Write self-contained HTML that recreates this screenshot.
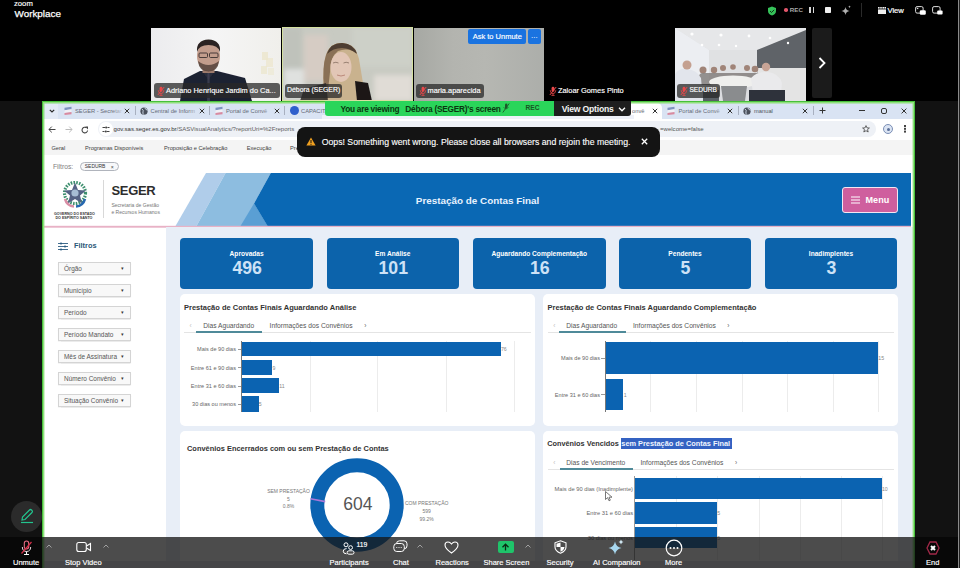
<!DOCTYPE html>
<html><head><meta charset="utf-8">
<style>
*{margin:0;padding:0;box-sizing:border-box}
html,body{width:960px;height:568px;overflow:hidden;background:#000;font-family:"Liberation Sans",sans-serif}
.a{position:absolute}
.t{position:absolute;white-space:nowrap;line-height:1}
#top{left:0;top:0;width:960px;height:101px;background:#000}
#share{left:0;top:101px;width:960px;height:467px;background:#121212}
#win{left:42px;top:101px;width:873px;height:467px;background:#fff;overflow:hidden}
#gb{left:42px;top:101px;width:873px;height:467px;border:1.3px solid #47c03b;border-bottom:none;box-shadow:inset 1.4px 1.4px 0 #8fe07c,inset -1.4px 0 0 #8fe07c;pointer-events:none}
</style></head><body>
<div class="a" id="top">
  <div class="t" style="left:14px;top:0px;font-size:7.7px;color:#fff;-webkit-text-stroke:0.15px #fff">zoom</div>
  <div class="t" style="left:14.5px;top:8.8px;font-size:9.9px;color:#fff;-webkit-text-stroke:0.25px #fff">Workplace</div>
</div>
<div class="a" id="share"></div>
<!-- gallery tiles -->
<svg class="a" style="left:151px;top:28px" width="130" height="73" viewBox="0 0 130 73">
 <defs><filter id="b1" x="-10%" y="-10%" width="120%" height="120%"><feGaussianBlur stdDeviation="0.55"/></filter>
 <linearGradient id="g1" x1="0" x2="1"><stop offset="0" stop-color="#ececee"/><stop offset="0.5" stop-color="#f5f5f5"/><stop offset="1" stop-color="#f0efeb"/></linearGradient></defs>
 <rect width="130" height="73" fill="url(#g1)"/>
 <g filter="url(#b1)">
 <rect x="111" y="24" width="6" height="8" fill="#ebe4c8" opacity="0.7"/><rect x="115" y="30" width="7" height="9" fill="#ece6cc" opacity="0.7"/><rect x="110" y="38" width="6" height="8" fill="#ebe5ca" opacity="0.7"/><rect x="117" y="40" width="6" height="7" fill="#ede7cf" opacity="0.6"/>
 <path d="M49 43 L66 43 L94 50 L101 73 L29 73 L33 51Z" fill="#1c2030"/>
 <path d="M51 43 L57.5 52 L64 43Z" fill="#2a2e3c"/>
 <rect x="51.5" y="37" width="12" height="8" fill="#9c7a6c"/>
 <ellipse cx="57.5" cy="28" rx="11.5" ry="15" fill="#c29c8c"/>
 <path d="M46 24 Q45 12 57.5 11.5 Q70 12 69 24 Q67 17 57.5 17 Q48 17 46 24Z" fill="#2b2321"/>
 <rect x="48" y="25" width="8.5" height="4.5" rx="1" fill="none" stroke="#3a3030" stroke-width="0.9"/>
 <rect x="58.5" y="25" width="8.5" height="4.5" rx="1" fill="none" stroke="#3a3030" stroke-width="0.9"/>
 <path d="M47 33 Q48 43.5 57.5 43.5 Q67 43.5 68 33 Q63 37 57.5 37 Q52 37 47 33Z" fill="#4e3c34" opacity="0.8"/>
 <path d="M56.5 45 L58.5 45 L59 73 L56 73Z" fill="#44465a" opacity="0.7"/>
 </g>
</svg>
<svg class="a" style="left:282px;top:27px" width="131" height="74" viewBox="0 0 131 74">
 <defs><filter id="b2" x="-20%" y="-20%" width="140%" height="140%"><feGaussianBlur stdDeviation="2.5"/></filter><filter id="b3" x="-20%" y="-20%" width="140%" height="140%"><feGaussianBlur stdDeviation="0.6"/></filter></defs>
 <rect width="131" height="74" fill="#c8cac2"/>
 <g filter="url(#b2)">
  <rect x="0" y="0" width="20" height="74" fill="#bfc2bb"/>
  <rect x="22" y="8" width="24" height="46" fill="#d6ccc4"/>
  <rect x="2" y="42" width="20" height="30" fill="#dfe1df"/>
  <rect x="92" y="48" width="39" height="26" fill="#e0dcd6"/>
  <rect x="70" y="0" width="61" height="40" fill="#cdd0c8"/>
 </g>
 <g filter="url(#b3)">
  <path d="M42 74 Q40 50 43 32 Q46 16 59 16 Q73 16 77 32 Q80 50 84 74Z" fill="#c9b28e"/>
  <path d="M42 60 Q40 40 44 28 Q48 16 60 16 Q72 17 75 26 Q66 20 56 24 Q48 30 48 45 Q47 55 46 62Z" fill="#8a7056"/>
  <path d="M45 27 Q48 16 60 16 Q72 17 75 27 Q68 21 60 21 Q51 21 45 27Z" fill="#4e3e30"/>
  <ellipse cx="59" cy="40" rx="10.5" ry="15" fill="#e2c6b6"/><path d="M51 36 Q54 34.5 56.5 36 M61.5 36 Q64 34.5 67 36" stroke="#6a5448" stroke-width="0.9" fill="none" opacity="0.7"/><path d="M55 48 Q59 50 63 48" stroke="#b0786a" stroke-width="1" fill="none" opacity="0.8"/>
  <path d="M73 54 L86 56 L90 74 L75 74Z" fill="#1a1818"/>
  <path d="M22 62 L44 56 L46 74 L18 74Z" fill="#34302c" opacity="0.9"/>
 </g>
</svg>
<div class="a" style="left:282px;top:27px;width:131px;height:74px;border:1.5px solid #d4e0a0"></div>
<div class="a" style="left:413.5px;top:28px;width:130px;height:73px;background:linear-gradient(90deg,#a6a8a3 0%,#b3b4af 30%,#b6b7b2 55%,#acaeaa 100%)"></div>
<div class="a" style="left:545px;top:28px;width:129px;height:73px;background:#000"></div>
<svg class="a" style="left:675px;top:28px" width="131" height="73" viewBox="0 0 131 73">
 <defs><filter id="b5" x="-10%" y="-10%" width="120%" height="120%"><feGaussianBlur stdDeviation="0.7"/></filter></defs>
 <rect width="131" height="73" fill="#dcdde0"/>
 <g filter="url(#b5)">
 <polygon points="0,0 131,0 131,3 82,22 34,22 0,0" fill="#e6e7e9"/>
 <polygon points="0,0 34,22 34,56 0,73" fill="#eceef2"/>
 <rect x="34" y="22" width="48" height="30" fill="#e0e1e3"/>
 <polygon points="82,22 131,2 131,45 82,45" fill="#5f6367"/>
 <polygon points="82,40 131,40 131,73 84,73" fill="#e4e4e4"/>
 <g fill="#fff"><circle cx="17" cy="6" r="1.6"/><circle cx="46" cy="7" r="1.6"/><circle cx="74" cy="8" r="1.4"/><circle cx="27" cy="17" r="1.3"/><circle cx="44" cy="17" r="1.3"/><circle cx="61" cy="18" r="1.2"/><circle cx="95" cy="10" r="1.3"/><circle cx="113" cy="15" r="1.2"/></g>
 <g fill="#a08478"><circle cx="28" cy="42" r="3.5"/><circle cx="39" cy="42" r="3.2"/><circle cx="48" cy="40" r="3"/><circle cx="58" cy="39" r="2.8"/><circle cx="72" cy="40" r="3"/><circle cx="80" cy="41" r="3.3"/></g>
 <rect x="24" y="45" width="64" height="12" rx="4" fill="#7d7876" opacity="0.8"/>
 <ellipse cx="58" cy="54" rx="24" ry="6.5" fill="#efefed"/>
 <polygon points="46,58 72,58 70,73 48,73" fill="#8a8c8e"/>
 <path d="M0 46 Q4 40 12 41 Q22 42 26 50 L28 73 L0 73Z" fill="#e2e5ec"/>
 <circle cx="12" cy="37" r="4.5" fill="#c4a090"/>
 <path d="M76 50 Q82 43 92 44 Q104 45 107 55 L106 66 L78 66Z" fill="#eaeaec"/>
 <circle cx="91" cy="39" r="4.2" fill="#c8a496"/>
 <rect x="74" y="62" width="36" height="11" fill="#2d313a"/>
 <rect x="28" y="62" width="16" height="11" fill="#3a3e44" opacity="0.8"/>
 </g>
</svg>
<div class="a" style="left:812px;top:28px;width:20px;height:70px;background:#1b1b1b;border-radius:2px"></div>
<svg class="a" style="left:818px;top:57px" width="8" height="12" viewBox="0 0 8 12"><path d="M1.5 1 L6.5 6 L1.5 11" stroke="#fff" stroke-width="1.8" fill="none"/></svg>
<!-- name labels -->
<div class="a" style="left:154px;top:83px;width:126px;height:15px;border-radius:3px;background:rgba(40,40,40,0.75)"></div>
<svg class="a" style="left:157px;top:85.5px" width="8" height="10" viewBox="0 0 8 10"><rect x="2.6" y="0.8" width="2.8" height="5" rx="1.4" fill="#e8484a"/><path d="M1.2 4.2 Q1.4 7.6 4 7.6 Q6.6 7.6 6.8 4.2 M4 7.6V9.4 M2.4 9.4H5.6" stroke="#e8484a" stroke-width="0.8" fill="none"/><path d="M0.8 9 L7.2 1" stroke="#e8484a" stroke-width="1"/></svg>
<div class="t" style="left:166px;top:87px;font-size:7.4px;color:#fff;-webkit-text-stroke:0.15px #fff">Adriano Henrique Jardim do Ca...</div>
<div class="a" style="left:285px;top:84px;width:57px;height:14px;border-radius:3px;background:rgba(40,40,40,0.75)"></div>
<div class="t" style="left:287px;top:87px;font-size:6.9px;color:#fff;-webkit-text-stroke:0.15px #fff">Débora (SEGER)</div>
<div class="a" style="left:416px;top:84px;width:68px;height:14px;border-radius:3px;background:rgba(40,40,40,0.75)"></div>
<svg class="a" style="left:419px;top:85.5px" width="8" height="10" viewBox="0 0 8 10"><rect x="2.6" y="0.8" width="2.8" height="5" rx="1.4" fill="#e8484a"/><path d="M1.2 4.2 Q1.4 7.6 4 7.6 Q6.6 7.6 6.8 4.2 M4 7.6V9.4 M2.4 9.4H5.6" stroke="#e8484a" stroke-width="0.8" fill="none"/><path d="M0.8 9 L7.2 1" stroke="#e8484a" stroke-width="1"/></svg>
<div class="t" style="left:427.5px;top:87px;font-size:7.4px;color:#fff;-webkit-text-stroke:0.15px #fff">maria.aparecida</div>
<div class="a" style="left:468px;top:29px;width:58px;height:15px;border-radius:2px;background:#1a73e0"></div>
<div class="t" style="left:472.7px;top:33px;font-size:7.5px;color:#fff;-webkit-text-stroke:0.15px #fff">Ask to Unmute</div>
<div class="a" style="left:528px;top:29px;width:13px;height:15px;border-radius:2px;background:#1a73e0"></div>
<div class="t" style="left:531px;top:32px;font-size:8px;color:#fff">...</div>
<svg class="a" style="left:549px;top:85.5px" width="8" height="10" viewBox="0 0 8 10"><rect x="2.6" y="0.8" width="2.8" height="5" rx="1.4" fill="#e8484a"/><path d="M1.2 4.2 Q1.4 7.6 4 7.6 Q6.6 7.6 6.8 4.2 M4 7.6V9.4 M2.4 9.4H5.6" stroke="#e8484a" stroke-width="0.8" fill="none"/><path d="M0.8 9 L7.2 1" stroke="#e8484a" stroke-width="1"/></svg>
<div class="t" style="left:558px;top:87px;font-size:7.4px;color:#fff;-webkit-text-stroke:0.15px #fff">Zaloar Gomes Pinto</div>
<div class="a" style="left:677px;top:84px;width:43px;height:14px;border-radius:3px;background:rgba(40,40,40,0.75)"></div>
<svg class="a" style="left:680px;top:85.5px" width="8" height="10" viewBox="0 0 8 10"><rect x="2.6" y="0.8" width="2.8" height="5" rx="1.4" fill="#e8484a"/><path d="M1.2 4.2 Q1.4 7.6 4 7.6 Q6.6 7.6 6.8 4.2 M4 7.6V9.4 M2.4 9.4H5.6" stroke="#e8484a" stroke-width="0.8" fill="none"/><path d="M0.8 9 L7.2 1" stroke="#e8484a" stroke-width="1"/></svg>
<div class="t" style="left:689.4px;top:87.3px;font-size:6.6px;color:#fff;-webkit-text-stroke:0.15px #fff">SEDURB</div>
<!-- top right icons -->
<svg class="a" style="left:766.5px;top:5.5px" width="10" height="10" viewBox="0 0 10 10"><path d="M5 0.5 L9 2 V5 Q9 8.3 5 9.6 Q1 8.3 1 5 V2Z" fill="#36c25a"/><path d="M3 5 L4.5 6.5 L7.2 3.8" stroke="#0a2a12" stroke-width="0.9" fill="none"/></svg>
<div class="a" style="left:784.3px;top:8.3px;width:3.6px;height:3.6px;border-radius:50%;background:#e2566a"></div>
<div class="t" style="left:789.8px;top:7.2px;font-size:6.2px;font-weight:bold;color:#a8a8a8">REC</div>
<div class="a" style="left:809.2px;top:7.2px;width:1.5px;height:6px;background:#d8d8d8"></div>
<div class="a" style="left:812.8px;top:7.2px;width:1.5px;height:6px;background:#d8d8d8"></div>
<div class="a" style="left:825.3px;top:7.3px;width:6px;height:6px;background:#f0f0f0;border-radius:0.8px"></div>
<svg class="a" style="left:841px;top:5px" width="11" height="11" viewBox="0 0 11 11"><path d="M4.5 2 Q5 5.5 8.5 6 Q5 6.5 4.5 10 Q4 6.5 0.5 6 Q4 5.5 4.5 2Z" fill="#b0b0b0"/><path d="M8.5 0.6 Q8.7 1.6 9.7 1.8 Q8.7 2 8.5 3 Q8.3 2 7.3 1.8 Q8.3 1.6 8.5 0.6Z" fill="#b0b0b0"/></svg>
<div class="a" style="left:861px;top:3px;width:0.8px;height:14px;background:#2a2a2a"></div>
<svg class="a" style="left:878px;top:6.5px" width="8" height="7" viewBox="0 0 8 7"><rect x="0" y="0" width="1.6" height="1.6" fill="#eee"/><rect x="2.2" y="0" width="1.6" height="1.6" fill="#eee"/><rect x="4.4" y="0" width="1.6" height="1.6" fill="#eee"/><rect x="6.4" y="0" width="1.6" height="1.6" fill="#eee"/><rect x="0" y="2.4" width="8" height="4.6" fill="#eee"/></svg>
<div class="t" style="left:887.5px;top:6.8px;font-size:7.6px;color:#fff;-webkit-text-stroke:0.2px #fff">View</div>
<svg class="a" style="left:914.5px;top:5.5px" width="11" height="9" viewBox="0 0 11 9"><rect x="0.6" y="0.6" width="7.5" height="6.5" rx="1.5" stroke="#ddd" stroke-width="1" fill="none"/><rect x="1.8" y="1.8" width="1.5" height="1.3" fill="#ddd"/><rect x="4.8" y="4.2" width="6" height="4.6" rx="1.2" fill="#fff"/></svg>
<svg class="a" style="left:932px;top:5.5px" width="11" height="9" viewBox="0 0 11 9"><rect x="0.6" y="0.6" width="7.5" height="6.5" rx="1.5" stroke="#ddd" stroke-width="1" fill="none"/><rect x="5.2" y="4.6" width="5.4" height="4" rx="1" fill="#fff"/></svg>

<div class="a" id="win">
<!-- browser chrome: coords relative to win (42,101) -->
<div class="a" style="left:0;top:0;width:873px;height:18px;background:#d9e3f3"></div>
<div class="a" style="left:3px;top:3px;width:13px;height:15px;background:#e3eaf6"></div>
<svg class="a" style="left:6.5px;top:7.5px" width="6" height="4" viewBox="0 0 6 4"><path d="M0.8 0.8 L3 3 L5.2 0.8" stroke="#2a2a2a" stroke-width="1.2" fill="none"/></svg>
<!-- tab 1 -->
<svg class="a" style="left:21px;top:4.5px" width="10" height="10" viewBox="0 0 10 10"><path d="M1.5 1.8 L8.5 0.8 V3.3 L1.5 4.3Z" fill="#7f93bf"/><path d="M1.5 4.3 L8.5 3.3 V6 L1.5 7Z" fill="#f0f0f6"/><path d="M1.5 7 L8.5 6 V8.3 L1.5 9Z" fill="#d98aa0"/></svg>
<div class="t" style="left:33px;top:7.5px;font-size:5.75px;color:#646a76">SEGER - Secretar</div>
<div class="a" style="left:70px;top:4px;width:12px;height:10px;background:linear-gradient(90deg,rgba(217,227,243,0),#d9e3f3)"></div>
<svg class="a" style="left:81.5px;top:6.5px" width="6" height="6" viewBox="0 0 6 6"><path d="M0.8 0.8 L5.2 5.2 M5.2 0.8 L0.8 5.2" stroke="#333" stroke-width="1"/></svg>
<div class="a" style="left:93px;top:5px;width:1px;height:9px;background:#a8b0c0"></div>
<!-- tab 2 -->
<svg class="a" style="left:97px;top:4.5px" width="10" height="10" viewBox="0 0 10 10"><circle cx="5" cy="5.2" r="3.6" fill="#4a505c"/><path d="M3 3 Q4.8 4.2 4 5.8 Q3.4 7.2 4.6 8.4 M5.8 1.8 Q6.4 3.6 8.4 4.2" stroke="#d9e3f3" stroke-width="0.9" fill="none"/></svg>
<div class="t" style="left:108.5px;top:7.5px;font-size:5.75px;color:#646a76">Central de Inform</div>
<div class="a" style="left:146px;top:4px;width:12px;height:10px;background:linear-gradient(90deg,rgba(217,227,243,0),#d9e3f3)"></div>
<svg class="a" style="left:156.5px;top:6.5px" width="6" height="6" viewBox="0 0 6 6"><path d="M0.8 0.8 L5.2 5.2 M5.2 0.8 L0.8 5.2" stroke="#333" stroke-width="1"/></svg>
<div class="a" style="left:167px;top:5px;width:1px;height:9px;background:#a8b0c0"></div>
<!-- tab 3 -->
<svg class="a" style="left:172px;top:4.5px" width="10" height="10" viewBox="0 0 10 10"><path d="M1.5 1.8 L8.5 0.8 V3.3 L1.5 4.3Z" fill="#7f93bf"/><path d="M1.5 4.3 L8.5 3.3 V6 L1.5 7Z" fill="#f0f0f6"/><path d="M1.5 7 L8.5 6 V8.3 L1.5 9Z" fill="#d98aa0"/></svg>
<div class="t" style="left:184px;top:7.5px;font-size:5.75px;color:#646a76">Portal de Convê</div>
<div class="a" style="left:220px;top:4px;width:12px;height:10px;background:linear-gradient(90deg,rgba(217,227,243,0),#d9e3f3)"></div>
<svg class="a" style="left:232px;top:6.5px" width="6" height="6" viewBox="0 0 6 6"><path d="M0.8 0.8 L5.2 5.2 M5.2 0.8 L0.8 5.2" stroke="#333" stroke-width="1"/></svg>
<div class="a" style="left:242px;top:5px;width:1px;height:9px;background:#a8b0c0"></div>
<!-- tab 4 -->
<div class="a" style="left:248px;top:5px;width:9px;height:9px;border-radius:50%;background:#2f5fcc"></div>
<div class="t" style="left:259px;top:7.5px;font-size:5.75px;color:#646a76">CAPACITA</div>
<!-- active tab (mostly hidden) -->
<div class="a" style="left:520px;top:2px;width:100px;height:17px;background:#fff;border-radius:5px 5px 0 0"></div>
<div class="t" style="left:590px;top:7.5px;font-size:5.75px;color:#646a76">onvê</div>
<svg class="a" style="left:609.5px;top:6.5px" width="6" height="6" viewBox="0 0 6 6"><path d="M0.8 0.8 L5.2 5.2 M5.2 0.8 L0.8 5.2" stroke="#333" stroke-width="1"/></svg>
<!-- tab portal -->
<svg class="a" style="left:624px;top:4.5px" width="10" height="10" viewBox="0 0 10 10"><path d="M1.5 1.8 L8.5 0.8 V3.3 L1.5 4.3Z" fill="#7f93bf"/><path d="M1.5 4.3 L8.5 3.3 V6 L1.5 7Z" fill="#f0f0f6"/><path d="M1.5 7 L8.5 6 V8.3 L1.5 9Z" fill="#d98aa0"/></svg>
<div class="t" style="left:636.5px;top:7.5px;font-size:5.75px;color:#646a76">Portal de Convê</div>
<div class="a" style="left:672px;top:4px;width:12px;height:10px;background:linear-gradient(90deg,rgba(217,227,243,0),#d9e3f3)"></div>
<svg class="a" style="left:685px;top:6.5px" width="6" height="6" viewBox="0 0 6 6"><path d="M0.8 0.8 L5.2 5.2 M5.2 0.8 L0.8 5.2" stroke="#333" stroke-width="1"/></svg>
<div class="a" style="left:696px;top:5px;width:1px;height:9px;background:#a8b0c0"></div>
<!-- tab manual -->
<svg class="a" style="left:700px;top:4.5px" width="10" height="10" viewBox="0 0 10 10"><circle cx="5" cy="5.2" r="3.6" fill="#4a505c"/><path d="M3 3 Q4.8 4.2 4 5.8 Q3.4 7.2 4.6 8.4 M5.8 1.8 Q6.4 3.6 8.4 4.2" stroke="#d9e3f3" stroke-width="0.9" fill="none"/></svg>
<div class="t" style="left:712px;top:7.5px;font-size:5.75px;color:#505560">manual</div>
<svg class="a" style="left:760px;top:6.5px" width="6" height="6" viewBox="0 0 6 6"><path d="M0.8 0.8 L5.2 5.2 M5.2 0.8 L0.8 5.2" stroke="#333" stroke-width="1"/></svg>
<div class="a" style="left:771px;top:5px;width:1px;height:9px;background:#a8b0c0"></div>
<svg class="a" style="left:776.5px;top:6px" width="7" height="7" viewBox="0 0 7 7"><path d="M3.5 0.5V6.5 M0.5 3.5H6.5" stroke="#333" stroke-width="1"/></svg>
<div class="a" style="left:817px;top:9px;width:6px;height:1px;background:#333"></div>
<div class="a" style="left:838.5px;top:6.5px;width:6px;height:6px;border:1.3px solid #333;border-radius:2px"></div>
<svg class="a" style="left:859px;top:6.5px" width="6" height="6" viewBox="0 0 6 6"><path d="M0.6 0.6 L5.4 5.4 M5.4 0.6 L0.6 5.4" stroke="#333" stroke-width="1"/></svg>
<!-- address row -->
<div class="a" style="left:0;top:18px;width:873px;height:20px;background:#fff"></div>
<svg class="a" style="left:6px;top:25.3px" width="8" height="7" viewBox="0 0 8 7"><path d="M7.5 3.5H1 M3.8 0.6 L0.9 3.5 L3.8 6.4" stroke="#444" stroke-width="1" fill="none"/></svg>
<svg class="a" style="left:22.5px;top:25.3px" width="8" height="7" viewBox="0 0 8 7"><path d="M0.5 3.5H7 M4.2 0.6 L7.1 3.5 L4.2 6.4" stroke="#bbb" stroke-width="1" fill="none"/></svg>
<svg class="a" style="left:39px;top:25px" width="8" height="8" viewBox="0 0 8 8"><path d="M6.6 4.5 A2.8 2.8 0 1 1 5.6 1.9" stroke="#444" stroke-width="1.1" fill="none"/><path d="M4.2 0.6 H7 V3.4Z" fill="#444"/></svg>
<div class="a" style="left:56px;top:20px;width:778px;height:16px;border-radius:8px;background:#eef1f6"></div>
<div class="a" style="left:57px;top:21px;width:14px;height:14px;border-radius:50%;background:#fff"></div>
<svg class="a" style="left:60px;top:24.5px" width="8" height="7" viewBox="0 0 8 7"><path d="M0.5 1.5H3 M5.5 1.5H7.5 M0.5 5.5H2.5 M5 5.5H7.5" stroke="#444" stroke-width="1"/><circle cx="4.2" cy="1.5" r="1.1" fill="#444"/><circle cx="3.8" cy="5.5" r="1.1" fill="#444"/></svg>
<div class="t" style="left:71.6px;top:25.3px;font-size:6.05px;color:#333">gov.sas.seger.es.gov.br<span style="color:#606060">/SASVisualAnalytics/?reportUri=%2Freports</span></div>
<div class="t" style="left:618px;top:25.3px;font-size:6.05px;color:#555">=welcome=false</div>
<svg class="a" style="left:820px;top:24px" width="8" height="8" viewBox="0 0 8 8"><path d="M4 0.6 L5 2.9 L7.4 3 L5.5 4.6 L6.2 7 L4 5.7 L1.8 7 L2.5 4.6 L0.6 3 L3 2.9Z" stroke="#444" stroke-width="0.8" fill="none"/></svg>
<div class="a" style="left:841px;top:23px;width:10px;height:10px;border-radius:50%;border:1.3px solid #7b8fb5;background:#dbe4f3"></div>
<div class="a" style="left:844.5px;top:26.5px;width:3px;height:3px;border-radius:50%;background:#5a6f98"></div>
<div class="a" style="left:862px;top:24px;width:1.6px;height:1.6px;background:#444;box-shadow:0 2.8px 0 #444,0 5.6px 0 #444"></div>
<!-- nav row -->
<div class="a" style="left:0;top:38.5px;width:873px;height:15px;background:#f4f4f4"></div>
<div class="t" style="left:9.4px;top:44.7px;font-size:5.65px;color:#404040">Geral</div>
<div class="t" style="left:43px;top:44.7px;font-size:5.65px;color:#404040">Programas Disponíveis</div>
<div class="t" style="left:122px;top:44.7px;font-size:5.65px;color:#404040">Proposição e Celebração</div>
<div class="t" style="left:204.7px;top:44.7px;font-size:5.65px;color:#404040">Execução</div>
<div class="t" style="left:248px;top:44.7px;font-size:5.65px;color:#404040">Prestação</div>

<!-- dashboard: coordinates relative to win (42,101) -->
<div class="a" style="left:0;top:54px;width:873px;height:420px;background:#fff"></div>
<div class="t" style="left:11px;top:63px;font-size:6.75px;color:#808080">Filtros:</div>
<div class="a" style="left:38.4px;top:60.5px;width:38.6px;height:9px;border:0.8px solid #b0b4bc;border-radius:5px;background:#f7f8fa"></div>
<div class="t" style="left:42.8px;top:64.1px;font-size:4.95px;color:#333">SEDURB</div>
<div class="t" style="left:68.8px;top:63.7px;font-size:5.2px;color:#444">×</div>
<!-- logo -->
<svg class="a" style="left:18px;top:78px" width="30" height="30" viewBox="0 0 30 30">
 <g transform="translate(1,1)">
 <circle cx="14" cy="13" r="10.5" fill="none" stroke="#3d8f6e" stroke-width="3.2" stroke-dasharray="1.6 1.2"/>
 <path d="M14 2.5 L17 10 L25 10.5 L19 15.5 L21 23.5 L14 19 L7 23.5 L9 15.5 L3 10.5 L11 10Z" fill="#556285"/>
 <circle cx="14" cy="13" r="3.6" fill="#a7bdd5"/>
 <path d="M4 19 Q6 26 13 26.5" stroke="#d98ea6" stroke-width="2.6" fill="none"/>
 <path d="M24 19 Q22 26 15 26.5" stroke="#2768b0" stroke-width="2.6" fill="none"/>
 </g>
</svg>
<div class="t" style="left:12px;top:111.5px;font-size:3.64px;color:#333;font-weight:bold">GOVERNO DO ESTADO</div>
<div class="t" style="left:13.5px;top:116px;font-size:3.64px;color:#333;font-weight:bold">DO ESPÍRITO SANTO</div>
<div class="a" style="left:61px;top:79px;width:0.8px;height:38px;background:#d8d8d8"></div>
<div class="t" style="left:69.4px;top:83.3px;font-size:13px;font-weight:bold;color:#2d2d2d;letter-spacing:-0.3px">SEGER</div>
<div class="t" style="left:69.4px;top:102px;font-size:5.05px;color:#777">Secretaria de Gestão</div>
<div class="t" style="left:69.4px;top:108.6px;font-size:5.05px;color:#777">e Recursos Humanos</div>
<!-- header band (abs y 173-225 => rel 72-124) -->
<svg class="a" style="left:0;top:72px" width="873" height="56" viewBox="0 0 873 56">
 <polygon points="164,0 183.6,0 154.5,53 133.5,53" fill="#b0cdea"/>
 <polygon points="183.6,0 228.8,0 212,30.6 225.5,53 154.5,53" fill="#8dbde0"/>
 <polygon points="212,30.6 225.5,53 198.5,53" fill="#5a9fd4"/>
 <polygon points="228.8,0 869,0 869,53 225.5,53 212,30.6" fill="#0a68b4"/>
 <rect x="0" y="52.8" width="869" height="1.9" fill="#e8b2c6"/>
</svg>
<div class="t" style="left:373.8px;top:94.6px;font-size:9.9px;font-weight:bold;color:#e8f3ff">Prestação de Contas Final</div>
<div class="a" style="left:800px;top:86px;width:56px;height:26px;border-radius:3px;background:#cf5f9e;border:1.7px solid #f3e6f2"></div>
<svg class="a" style="left:808.8px;top:95px" width="9.2" height="8" viewBox="0 0 9.2 8"><path d="M0 1H9.2M0 4H9.2M0 7H9.2" stroke="#fff" stroke-width="1.1"/></svg>
<div class="t" style="left:823.6px;top:95px;font-size:9.04px;font-weight:bold;color:#fff">Menu</div>
<!-- main area bg -->
<div class="a" style="left:124px;top:126px;width:749px;height:350px;background:#e8eef7"></div>
<!-- sidebar -->
<svg class="a" style="left:16px;top:141px" width="10" height="9" viewBox="0 0 10 9"><path d="M0 1.5H10M0 4.5H10M0 7.5H10" stroke="#2b5b80" stroke-width="0.9"/><circle cx="3" cy="1.5" r="1.1" fill="#2b5b80"/><circle cx="7" cy="4.5" r="1.1" fill="#2b5b80"/><circle cx="3" cy="7.5" r="1.1" fill="#2b5b80"/></svg>
<div class="t" style="left:32px;top:141.4px;font-size:7.4px;font-weight:bold;color:#2b5878">Filtros</div>
<div class="a" style="left:16px;top:161px;width:73px;height:12.5px;border:0.8px solid #d4d4d4;background:#f8f8f8;box-shadow:0 0.8px 1px rgba(0,0,0,0.08)"></div>
<div class="t" style="left:22px;top:165.4px;font-size:6.45px;color:#555">Órgão</div>
<div class="t" style="left:78.2px;top:166.0px;font-size:4.2px;color:#333">▼</div>
<div class="a" style="left:16px;top:183px;width:73px;height:12.5px;border:0.8px solid #d4d4d4;background:#f8f8f8;box-shadow:0 0.8px 1px rgba(0,0,0,0.08)"></div>
<div class="t" style="left:22px;top:187.4px;font-size:6.45px;color:#555">Município</div>
<div class="t" style="left:78.2px;top:188.0px;font-size:4.2px;color:#333">▼</div>
<div class="a" style="left:16px;top:205px;width:73px;height:12.5px;border:0.8px solid #d4d4d4;background:#f8f8f8;box-shadow:0 0.8px 1px rgba(0,0,0,0.08)"></div>
<div class="t" style="left:22px;top:209.4px;font-size:6.45px;color:#555">Período</div>
<div class="t" style="left:78.2px;top:210.0px;font-size:4.2px;color:#333">▼</div>
<div class="a" style="left:16px;top:227px;width:73px;height:12.5px;border:0.8px solid #d4d4d4;background:#f8f8f8;box-shadow:0 0.8px 1px rgba(0,0,0,0.08)"></div>
<div class="t" style="left:22px;top:231.4px;font-size:6.45px;color:#555">Período Mandato</div>
<div class="t" style="left:78.2px;top:232.0px;font-size:4.2px;color:#333">▼</div>
<div class="a" style="left:16px;top:249px;width:73px;height:12.5px;border:0.8px solid #d4d4d4;background:#f8f8f8;box-shadow:0 0.8px 1px rgba(0,0,0,0.08)"></div>
<div class="t" style="left:22px;top:253.4px;font-size:6.45px;color:#555">Mês de Assinatura</div>
<div class="t" style="left:78.2px;top:254.0px;font-size:4.2px;color:#333">▼</div>
<div class="a" style="left:16px;top:271px;width:73px;height:12.5px;border:0.8px solid #d4d4d4;background:#f8f8f8;box-shadow:0 0.8px 1px rgba(0,0,0,0.08)"></div>
<div class="t" style="left:22px;top:275.4px;font-size:6.45px;color:#555">Número Convênio</div>
<div class="t" style="left:78.2px;top:276.0px;font-size:4.2px;color:#333">▼</div>
<div class="a" style="left:16px;top:293px;width:73px;height:12.5px;border:0.8px solid #d4d4d4;background:#f8f8f8;box-shadow:0 0.8px 1px rgba(0,0,0,0.08)"></div>
<div class="t" style="left:22px;top:297.4px;font-size:6.45px;color:#555">Situação Convênio</div>
<div class="t" style="left:78.2px;top:298.0px;font-size:4.2px;color:#333">▼</div>

<div class="a" style="left:138.3px;top:137px;width:132.7px;height:50.5px;background:#0c63ab;border-radius:4px;"></div>
<div class="t" style="left:104.65px;width:200px;text-align:center;top:149.52px;font-size:6.6px;color:#fff;font-weight:bold;">Aprovadas</div>
<div class="t" style="left:105.15px;width:200px;text-align:center;top:159.07px;font-size:17.7px;color:#cde2f6;font-weight:bold;">496</div>
<div class="a" style="left:284.5px;top:137px;width:132.5px;height:50.5px;background:#0c63ab;border-radius:4px;"></div>
<div class="t" style="left:250.75px;width:200px;text-align:center;top:149.52px;font-size:6.6px;color:#fff;font-weight:bold;">Em Análise</div>
<div class="t" style="left:251.25px;width:200px;text-align:center;top:159.07px;font-size:17.7px;color:#cde2f6;font-weight:bold;">101</div>
<div class="a" style="left:431px;top:137px;width:132.5px;height:50.5px;background:#0c63ab;border-radius:4px;"></div>
<div class="t" style="left:397.25px;width:200px;text-align:center;top:149.52px;font-size:6.6px;color:#fff;font-weight:bold;">Aguardando Complementação</div>
<div class="t" style="left:397.75px;width:200px;text-align:center;top:159.07px;font-size:17.7px;color:#cde2f6;font-weight:bold;">16</div>
<div class="a" style="left:577px;top:137px;width:132px;height:50.5px;background:#0c63ab;border-radius:4px;"></div>
<div class="t" style="left:543.0px;width:200px;text-align:center;top:149.52px;font-size:6.6px;color:#fff;font-weight:bold;">Pendentes</div>
<div class="t" style="left:543.5px;width:200px;text-align:center;top:159.07px;font-size:17.7px;color:#cde2f6;font-weight:bold;">5</div>
<div class="a" style="left:723px;top:137px;width:132px;height:50.5px;background:#0c63ab;border-radius:4px;"></div>
<div class="t" style="left:689.0px;width:200px;text-align:center;top:149.52px;font-size:6.6px;color:#fff;font-weight:bold;">Inadimplentes</div>
<div class="t" style="left:689.5px;width:200px;text-align:center;top:159.07px;font-size:17.7px;color:#cde2f6;font-weight:bold;">3</div>
<div class="a" style="left:137.5px;top:192.75px;width:355.1px;height:131.95px;background:#fff;border-radius:5px;"></div>
<div class="a" style="left:501.3px;top:192.75px;width:354.7px;height:131.95px;background:#fff;border-radius:5px;"></div>
<div class="a" style="left:137.5px;top:329.5px;width:355.1px;height:169.5px;background:#fff;border-radius:5px;"></div>
<div class="a" style="left:501.3px;top:329.5px;width:354.7px;height:169.5px;background:#fff;border-radius:5px;"></div>
<div class="t" style="left:142px;top:202.99px;font-size:7.5px;color:#333;font-weight:bold;">Prestação de Contas Finais Aguardando Análise</div>
<div class="t" style="left:147.5px;top:221.67px;font-size:6.5px;color:#c0c0c0;">‹</div>
<div class="t" style="left:161.3px;top:221.60px;font-size:6.64px;color:#555;">Dias Aguardando</div>
<div class="t" style="left:227.6px;top:221.57px;font-size:6.7px;color:#555;">Informações dos Convênios</div>
<div class="t" style="left:322.3px;top:221.67px;font-size:6.5px;color:#666;">›</div>
<div class="a" style="left:142px;top:231px;width:347px;height:0.8px;background:#e4e4e4;"></div>
<div class="a" style="left:153.6px;top:230.4px;width:66.7px;height:1.6px;background:#4f8a99;"></div>
<div class="a" style="left:267.5px;top:239.6px;width:0.7px;height:71.2px;background:#ececec;"></div>
<div class="a" style="left:335px;top:239.6px;width:0.7px;height:71.2px;background:#ececec;"></div>
<div class="a" style="left:403.5px;top:239.6px;width:0.7px;height:71.2px;background:#ececec;"></div>
<div class="a" style="left:472px;top:239.6px;width:0.7px;height:71.2px;background:#ececec;"></div>
<div class="a" style="left:199.2px;top:239.6px;width:0.8px;height:71.2px;background:#777;"></div>
<div class="a" style="left:200px;top:240.8px;width:258.6px;height:14.6px;background:#0b63b1;"></div>
<div class="t" style="left:-6px;width:200px;text-align:right;top:246.22px;font-size:5.57px;color:#666">Mais de 90 dias</div>
<div class="a" style="left:195.5px;top:247.8px;width:3.5px;height:0.7px;background:#999;"></div>
<div class="t" style="left:458.9px;top:246.19px;font-size:5.2px;color:#888;">76</div>
<div class="a" style="left:200px;top:259px;width:30.3px;height:15px;background:#0b63b1;"></div>
<div class="t" style="left:-6px;width:200px;text-align:right;top:264.62px;font-size:5.57px;color:#666">Entre 61 e 90 dias</div>
<div class="a" style="left:195.5px;top:266.2px;width:3.5px;height:0.7px;background:#999;"></div>
<div class="t" style="left:230.6px;top:264.59px;font-size:5.2px;color:#888;">9</div>
<div class="a" style="left:200px;top:277.4px;width:37px;height:15.1px;background:#0b63b1;"></div>
<div class="t" style="left:-6px;width:200px;text-align:right;top:283.07px;font-size:5.57px;color:#666">Entre 31 e 60 dias</div>
<div class="a" style="left:195.5px;top:284.65px;width:3.5px;height:0.7px;background:#999;"></div>
<div class="t" style="left:237.3px;top:283.04px;font-size:5.2px;color:#888;">11</div>
<div class="a" style="left:200px;top:295.3px;width:16.5px;height:15.5px;background:#0b63b1;"></div>
<div class="t" style="left:-6px;width:200px;text-align:right;top:301.17px;font-size:5.57px;color:#666">30 dias ou menos</div>
<div class="a" style="left:195.5px;top:302.75px;width:3.5px;height:0.7px;background:#999;"></div>
<div class="t" style="left:216.8px;top:301.14px;font-size:5.2px;color:#888;">5</div>
<div class="t" style="left:505.5px;top:202.98px;font-size:7.52px;color:#333;font-weight:bold;">Prestação de Contas Finais Aguardando Complementação</div>
<div class="t" style="left:511.3px;top:221.67px;font-size:6.5px;color:#c0c0c0;">‹</div>
<div class="t" style="left:524.3px;top:221.60px;font-size:6.64px;color:#555;">Dias Aguardando</div>
<div class="t" style="left:591px;top:221.57px;font-size:6.7px;color:#555;">Informações dos Convênios</div>
<div class="t" style="left:685.3px;top:221.67px;font-size:6.5px;color:#666;">›</div>
<div class="a" style="left:506px;top:231px;width:346px;height:0.8px;background:#e4e4e4;"></div>
<div class="a" style="left:517px;top:230.4px;width:67px;height:1.6px;background:#4f8a99;"></div>
<div class="a" style="left:608px;top:240px;width:0.7px;height:71px;background:#ececec;"></div>
<div class="a" style="left:654px;top:240px;width:0.7px;height:71px;background:#ececec;"></div>
<div class="a" style="left:700px;top:240px;width:0.7px;height:71px;background:#ececec;"></div>
<div class="a" style="left:745px;top:240px;width:0.7px;height:71px;background:#ececec;"></div>
<div class="a" style="left:791px;top:240px;width:0.7px;height:71px;background:#ececec;"></div>
<div class="a" style="left:836px;top:240px;width:0.7px;height:71px;background:#ececec;"></div>
<div class="a" style="left:562.8px;top:240px;width:0.8px;height:71px;background:#777;"></div>
<div class="a" style="left:563.6px;top:241px;width:272.4px;height:32px;background:#0b63b1;"></div>
<div class="t" style="left:358px;width:200px;text-align:right;top:255.12px;font-size:5.57px;color:#666">Mais de 90 dias</div>
<div class="a" style="left:559.3px;top:256.7px;width:3.5px;height:0.7px;background:#999;"></div>
<div class="t" style="left:836.3px;top:255.09px;font-size:5.2px;color:#888;">15</div>
<div class="a" style="left:563.6px;top:278px;width:17.8px;height:31px;background:#0b63b1;"></div>
<div class="t" style="left:358px;width:200px;text-align:right;top:291.62px;font-size:5.57px;color:#666">Entre 31 e 60 dias</div>
<div class="a" style="left:559.3px;top:293.2px;width:3.5px;height:0.7px;background:#999;"></div>
<div class="t" style="left:581.7px;top:291.59px;font-size:5.2px;color:#888;">1</div>
<div class="t" style="left:145px;top:343.62px;font-size:7.43px;color:#333;font-weight:bold;">Convênios Encerrados com ou sem Prestação de Contas</div>
<svg class="a" style="left:265.3px;top:353.7px" width="100" height="100" viewBox="0 0 100 100"><circle cx="50" cy="50" r="39.7" fill="none" stroke="#0b63b1" stroke-width="14"/><line x1="3.5" y1="43.8" x2="18.2" y2="46.6" stroke="#a878d8" stroke-width="1.6"/></svg>
<div class="t" style="left:215.8px;width:200px;text-align:center;top:394.96px;font-size:17.5px;color:#555;">604</div>
<div class="t" style="left:146.5px;width:200px;text-align:center;top:387.59px;font-size:5.0px;color:#777;">SEM PRESTAÇÃO</div>
<div class="t" style="left:146.5px;width:200px;text-align:center;top:395.79px;font-size:5.0px;color:#777;">5</div>
<div class="t" style="left:146.5px;width:200px;text-align:center;top:402.99px;font-size:5.0px;color:#777;">0.8%</div>
<div class="t" style="left:284.7px;width:200px;text-align:center;top:400.29px;font-size:5.0px;color:#777;">COM PRESTAÇÃO</div>
<div class="t" style="left:284.7px;width:200px;text-align:center;top:408.49px;font-size:5.0px;color:#777;">599</div>
<div class="t" style="left:284.7px;width:200px;text-align:center;top:415.69px;font-size:5.0px;color:#777;">99.2%</div>
<div class="t" style="left:505.2px;top:339.46px;font-size:7.34px;color:#333;font-weight:bold;">Convênios Vencidos</div>
<div class="a" style="left:578.5px;top:337.25px;width:111.0px;height:10.45px;background:#3462c2;"></div>
<div class="t" style="left:579.3px;top:339.45px;font-size:7.37px;color:#f0f5ff;font-weight:bold;">sem Prestação de Contas Final</div>
<div class="t" style="left:511.3px;top:358.67px;font-size:6.5px;color:#c0c0c0;">‹</div>
<div class="t" style="left:524.3px;top:358.60px;font-size:6.64px;color:#555;">Dias de Vencimento</div>
<div class="t" style="left:598.5px;top:358.57px;font-size:6.7px;color:#555;">Informações dos Convênios</div>
<div class="t" style="left:693px;top:358.67px;font-size:6.5px;color:#666;">›</div>
<div class="a" style="left:506px;top:367.9px;width:346px;height:0.8px;background:#e4e4e4;"></div>
<div class="a" style="left:517.7px;top:367.3px;width:73.3px;height:1.6px;background:#4f8a99;"></div>
<div class="a" style="left:634px;top:375px;width:0.7px;height:84px;background:#ececec;"></div>
<div class="a" style="left:675px;top:375px;width:0.7px;height:84px;background:#ececec;"></div>
<div class="a" style="left:716.5px;top:375px;width:0.7px;height:84px;background:#ececec;"></div>
<div class="a" style="left:757.5px;top:375px;width:0.7px;height:84px;background:#ececec;"></div>
<div class="a" style="left:798.7px;top:375px;width:0.7px;height:84px;background:#ececec;"></div>
<div class="a" style="left:839.6px;top:375px;width:0.7px;height:84px;background:#ececec;"></div>
<div class="a" style="left:592.2px;top:375px;width:0.8px;height:84px;background:#999;"></div>
<div class="a" style="left:593px;top:377.3px;width:246.6px;height:20.45px;background:#0b63b1;"></div>
<div class="t" style="left:391px;width:200px;text-align:right;top:385.56px;font-size:5.74px;color:#666">Mais de 90 dias (Inadimplente)</div>
<div class="t" style="left:839.9px;top:385.62px;font-size:5.2px;color:#888;">10</div>
<div class="a" style="left:593px;top:401.3px;width:82px;height:21.45px;background:#0b63b1;"></div>
<div class="t" style="left:391px;width:200px;text-align:right;top:410.06px;font-size:5.74px;color:#666">Entre 31 e 60 dias</div>
<div class="t" style="left:675.3px;top:410.12px;font-size:5.2px;color:#888;">5</div>
<div class="a" style="left:593px;top:426.3px;width:82px;height:20.7px;background:#0b63b1;"></div>
<div class="t" style="left:391px;width:200px;text-align:right;top:434.68px;font-size:5.74px;color:#666">30 dias ou menos</div>
<div class="t" style="left:675.3px;top:434.74px;font-size:5.2px;color:#888;">5</div>
<svg class="a" style="left:562.5px;top:390px" width="8" height="11" viewBox="0 0 8 11"><path d="M0.5 0.5 L0.5 8.5 L2.6 6.6 L4 9.8 L5.3 9.2 L4 6.2 L7 6.2 Z" fill="#fff" stroke="#555" stroke-width="0.8"/></svg>
<div class="a" style="left:0;top:460px;width:873px;height:10px;background:#dfe2ea"></div>


</div>
<div class="a" id="gb"></div>
<!-- banner -->
<div class="a" style="left:322px;top:115px;width:312px;height:4px;background:#eef1f8"></div>
<div class="a" style="left:325px;top:101px;width:229px;height:15px;background:#2ad55a;border-radius:0 0 0 3px"></div>
<div class="t" style="left:340.5px;top:104.6px;font-size:8.3px;letter-spacing:-0.25px;font-weight:bold;color:#0a3510">You are viewing</div><div class="t" style="left:405.3px;top:104.6px;font-size:8.3px;letter-spacing:-0.25px;font-weight:bold;color:#0a3510">Débora (SEGER)'s screen</div>
<svg class="a" style="left:502px;top:103px" width="8" height="10" viewBox="0 0 8 10"><rect x="3" y="0.5" width="2.4" height="5" rx="1.2" fill="#1c5a2a"/><path d="M0.8 9.5 L7.2 0.5" stroke="#1c5a2a" stroke-width="0.9"/><path d="M1.5 4.5 Q4 7.5 6.5 4.5" stroke="#1c5a2a" stroke-width="0.7" fill="none"/></svg>
<div class="t" style="left:525.5px;top:105.3px;font-size:6.6px;font-weight:bold;color:#185424">REC</div>
<div class="a" style="left:554px;top:101px;width:77px;height:15px;background:#1e1e1e;border-radius:0 0 3px 0"></div>
<div class="t" style="left:561.7px;top:105.3px;font-size:8.6px;letter-spacing:-0.2px;font-weight:bold;color:#f4f4f4">View Options</div>
<svg class="a" style="left:617.5px;top:107px" width="8" height="5" viewBox="0 0 8 5"><path d="M1 0.8 L4 3.8 L7 0.8" stroke="#fff" stroke-width="1.3" fill="none"/></svg>
<!-- toast -->
<div class="a" style="left:297px;top:127px;width:363px;height:30px;background:#141414;border-radius:8px"></div>
<svg class="a" style="left:305.5px;top:136.5px" width="10" height="9" viewBox="0 0 10 9"><path d="M5 0.5 L9.6 8.5 H0.4Z" fill="#f0a020"/><rect x="4.5" y="3" width="1" height="3" fill="#141414"/><rect x="4.5" y="6.8" width="1" height="1" fill="#141414"/></svg>
<div class="t" style="left:321.7px;top:137.5px;font-size:8.73px;color:#fff;-webkit-text-stroke:0.12px #fff">Oops! Something went wrong. Please close all browsers and rejoin the meeting.</div>
<svg class="a" style="left:640.5px;top:138px" width="7" height="7" viewBox="0 0 7 7"><path d="M0.8 0.8 L6.2 6.2 M6.2 0.8 L0.8 6.2" stroke="#fff" stroke-width="1.3"/></svg>
<!-- bottom toolbar -->
<div class="a" style="left:0;top:537px;width:42px;height:31px;background:#080808"></div>
<div class="a" style="left:915px;top:537px;width:45px;height:31px;background:#080808"></div>
<div class="a" style="left:42px;top:537px;width:873px;height:31px;background:rgba(22,22,22,0.77)"></div>
<div class="a" style="left:11px;top:501px;width:31px;height:31px;border-radius:50%;background:#2b2b2b"></div>
<svg class="a" style="left:19px;top:508px" width="16" height="16" viewBox="0 0 16 16"><path d="M3 12 L3.5 9 L10.5 2 Q11.5 1 12.5 2 L13 2.5 Q14 3.5 13 4.5 L6 11.5Z" stroke="#23c48e" stroke-width="1.2" fill="none"/><path d="M2 14.5 H14" stroke="#23c48e" stroke-width="1.2"/></svg>
<svg class="a" style="left:19.5px;top:539.5px" width="13" height="16" viewBox="0 0 13 16"><rect x="4.3" y="1" width="4.4" height="8" rx="2.2" stroke="#e26a80" stroke-width="1.1" fill="none"/><path d="M2.3 7 Q2.5 11.5 6.5 11.5 Q10.5 11.5 10.7 7" stroke="#e8d8dc" stroke-width="1" fill="none"/><path d="M6.5 11.5V14.5 M4 14.5H9" stroke="#fff" stroke-width="1.1" fill="none"/><path d="M1.5 13.5 L11.5 2" stroke="#d8304a" stroke-width="1.2"/></svg>
<div class="t" style="left:13px;top:559px;font-size:7.5px;color:#fff;-webkit-text-stroke:0.15px #fff">Unmute</div>
<svg class="a" style="left:46px;top:544px" width="6" height="4" viewBox="0 0 6 4"><path d="M0.5 3.5 L3 1 L5.5 3.5" stroke="#aaa" stroke-width="0.9" fill="none"/></svg>
<svg class="a" style="left:76px;top:541px" width="16" height="12" viewBox="0 0 16 12"><rect x="0.8" y="1.5" width="9.5" height="9" rx="2" stroke="#fff" stroke-width="1.1" fill="none"/><path d="M10.5 5 L14.5 2.5 V9.5 L10.5 7" stroke="#fff" stroke-width="1.1" fill="none"/></svg>
<div class="t" style="left:65px;top:559px;font-size:7.5px;color:#fff;-webkit-text-stroke:0.15px #fff">Stop Video</div>
<svg class="a" style="left:103px;top:544px" width="6" height="4" viewBox="0 0 6 4"><path d="M0.5 3.5 L3 1 L5.5 3.5" stroke="#aaa" stroke-width="0.9" fill="none"/></svg>
<svg class="a" style="left:342px;top:541.5px" width="13" height="13" viewBox="0 0 13 13"><circle cx="4" cy="2.8" r="2" stroke="#fff" stroke-width="1" fill="none"/><path d="M4.6 6.6 Q1.2 6.6 1.2 9.2 Q1.2 11.8 4.6 11.8" stroke="#fff" stroke-width="1" fill="none"/><circle cx="8.6" cy="5.6" r="1.9" stroke="#fff" stroke-width="1" fill="none"/><rect x="5.2" y="8.8" width="6.8" height="3.4" rx="1.7" stroke="#fff" stroke-width="1" fill="none"/></svg>
<div class="t" style="left:356.5px;top:542px;font-size:6.8px;color:#fff;-webkit-text-stroke:0.15px #fff">119</div>
<div class="t" style="left:329.5px;top:559px;font-size:7.5px;color:#fff;-webkit-text-stroke:0.15px #fff">Participants</div>
<svg class="a" style="left:393px;top:540px" width="15" height="14" viewBox="0 0 15 14"><rect x="3.5" y="0.8" width="10.5" height="8" rx="3" stroke="#fff" stroke-width="1" fill="none"/><rect x="0.8" y="3.5" width="10.5" height="8" rx="3" stroke="#fff" stroke-width="1" fill="#4a4a4a"/><circle cx="3.8" cy="7.5" r="0.6" fill="#fff"/><circle cx="6" cy="7.5" r="0.6" fill="#fff"/><circle cx="8.2" cy="7.5" r="0.6" fill="#fff"/></svg>
<div class="t" style="left:393px;top:559px;font-size:7.5px;color:#fff;-webkit-text-stroke:0.15px #fff">Chat</div>
<svg class="a" style="left:417px;top:544px" width="6" height="4" viewBox="0 0 6 4"><path d="M0.5 3.5 L3 1 L5.5 3.5" stroke="#aaa" stroke-width="0.9" fill="none"/></svg>
<svg class="a" style="left:444px;top:541px" width="15" height="13" viewBox="0 0 15 13"><path d="M7.5 12 Q1 7.5 1 4 Q1 1 4 1 Q6 1 7.5 3 Q9 1 11 1 Q14 1 14 4 Q14 7.5 7.5 12Z" stroke="#fff" stroke-width="1.1" fill="none"/></svg>
<div class="t" style="left:435.5px;top:559px;font-size:7.5px;color:#fff;-webkit-text-stroke:0.15px #fff">Reactions</div>
<div class="a" style="left:497.5px;top:541px;width:16px;height:12px;border-radius:2px;background:#1fc46a"></div>
<svg class="a" style="left:501px;top:543px" width="9" height="8" viewBox="0 0 9 8"><path d="M4.5 7.5V1.5 M1.5 4.2 L4.5 1.2 L7.5 4.2" stroke="#0a2a14" stroke-width="1.3" fill="none"/></svg>
<div class="t" style="left:483.5px;top:559px;font-size:7.5px;color:#fff;-webkit-text-stroke:0.15px #fff">Share Screen</div>
<svg class="a" style="left:525px;top:544px" width="6" height="4" viewBox="0 0 6 4"><path d="M0.5 3.5 L3 1 L5.5 3.5" stroke="#aaa" stroke-width="0.9" fill="none"/></svg>
<svg class="a" style="left:553.5px;top:540px" width="13" height="14" viewBox="0 0 13 14"><path d="M6.5 0.8 L12 2.8 V7 Q12 11 6.5 13.2 Q1 11 1 7 V2.8Z" stroke="#fff" stroke-width="1.1" fill="none"/><path d="M6.5 2.5 V7 H10.5 Q10 10.5 6.5 11.8 V7 H2.5 V3.8Z" fill="#fff"/></svg>
<div class="t" style="left:546.5px;top:559px;font-size:7.5px;color:#fff;-webkit-text-stroke:0.15px #fff">Security</div>
<svg class="a" style="left:607px;top:539px" width="18" height="16" viewBox="0 0 18 16"><path d="M8 2.5 Q9 8 14.5 9 Q9 10 8 15.5 Q7 10 1.5 9 Q7 8 8 2.5Z" fill="#a8d8f0"/><path d="M14 0.5 Q14.4 2.6 16.5 3 Q14.4 3.4 14 5.5 Q13.6 3.4 11.5 3 Q13.6 2.6 14 0.5Z" fill="#d6eefa"/></svg>
<div class="t" style="left:593px;top:559px;font-size:7.5px;color:#fff;-webkit-text-stroke:0.15px #fff">AI Companion</div>
<svg class="a" style="left:665px;top:539px" width="18" height="18" viewBox="0 0 18 18"><circle cx="9" cy="9" r="7.8" stroke="#fff" stroke-width="1.2" fill="none"/><circle cx="5.5" cy="9" r="1" fill="#fff"/><circle cx="9" cy="9" r="1" fill="#fff"/><circle cx="12.5" cy="9" r="1" fill="#fff"/></svg>
<div class="t" style="left:665px;top:559px;font-size:7.5px;color:#fff;-webkit-text-stroke:0.15px #fff">More</div>
<svg class="a" style="left:926px;top:541px" width="14" height="14" viewBox="0 0 14 14"><path d="M4 1 H10 L13 7 L10 13 H4 L1 7Z" stroke="#a02848" stroke-width="1.3" fill="none"/><path d="M5 5 L9 9 M9 5 L5 9" stroke="#fff" stroke-width="2"/></svg>
<div class="t" style="left:926px;top:559px;font-size:7.5px;color:#fff;-webkit-text-stroke:0.15px #fff">End</div>
<div class="a" style="left:958.2px;top:0;width:1.1px;height:568px;background:#8a8a8a"></div><div class="a" style="left:959.3px;top:0;width:0.7px;height:568px;background:#222"></div>

</body></html>
